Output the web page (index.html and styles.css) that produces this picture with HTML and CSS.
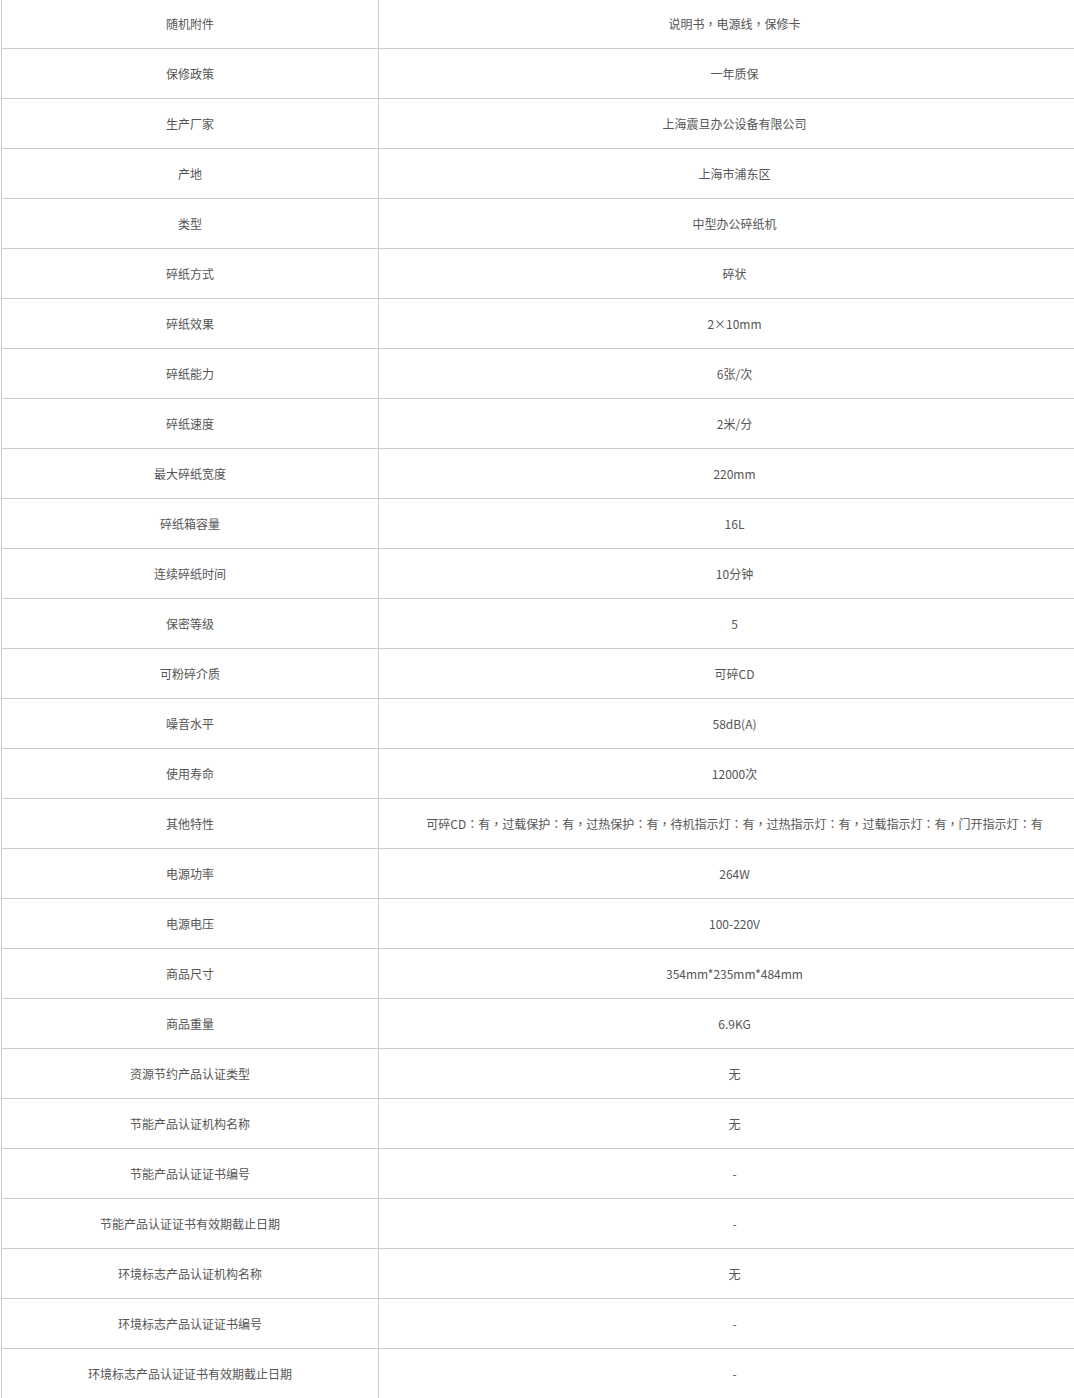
FILE: index.html
```html
<!DOCTYPE html>
<html lang="zh-CN">
<head>
<meta charset="utf-8">
<link rel="stylesheet" href="styles.css">
</head>
<body>
<table class="spec">
<tbody>
<tr><td class="k">随机附件</td><td class="v">说明书<span class="p" lang="zh-TW">，</span>电源线<span class="p" lang="zh-TW">，</span>保修卡</td></tr>
<tr><td class="k">保修政策</td><td class="v">一年质保</td></tr>
<tr><td class="k">生产厂家</td><td class="v">上海震旦办公设备有限公司</td></tr>
<tr><td class="k">产地</td><td class="v">上海市浦东区</td></tr>
<tr><td class="k">类型</td><td class="v">中型办公碎纸机</td></tr>
<tr><td class="k">碎纸方式</td><td class="v">碎状</td></tr>
<tr><td class="k">碎纸效果</td><td class="v">2×10mm</td></tr>
<tr><td class="k">碎纸能力</td><td class="v">6张/次</td></tr>
<tr><td class="k">碎纸速度</td><td class="v">2米/分</td></tr>
<tr><td class="k">最大碎纸宽度</td><td class="v">220mm</td></tr>
<tr><td class="k">碎纸箱容量</td><td class="v">16L</td></tr>
<tr><td class="k">连续碎纸时间</td><td class="v">10分钟</td></tr>
<tr><td class="k">保密等级</td><td class="v">5</td></tr>
<tr><td class="k">可粉碎介质</td><td class="v">可碎CD</td></tr>
<tr><td class="k">噪音水平</td><td class="v">58dB(A)</td></tr>
<tr><td class="k">使用寿命</td><td class="v">12000次</td></tr>
<tr><td class="k">其他特性</td><td class="v">可碎CD<span class="p" lang="zh-TW">：</span>有<span class="p" lang="zh-TW">，</span>过载保护<span class="p" lang="zh-TW">：</span>有<span class="p" lang="zh-TW">，</span>过热保护<span class="p" lang="zh-TW">：</span>有<span class="p" lang="zh-TW">，</span>待机指示灯<span class="p" lang="zh-TW">：</span>有<span class="p" lang="zh-TW">，</span>过热指示灯<span class="p" lang="zh-TW">：</span>有<span class="p" lang="zh-TW">，</span>过载指示灯<span class="p" lang="zh-TW">：</span>有<span class="p" lang="zh-TW">，</span>门开指示灯<span class="p" lang="zh-TW">：</span>有</td></tr>
<tr><td class="k">电源功率</td><td class="v">264W</td></tr>
<tr><td class="k">电源电压</td><td class="v">100-220V</td></tr>
<tr><td class="k">商品尺寸</td><td class="v">354mm*235mm*484mm</td></tr>
<tr><td class="k">商品重量</td><td class="v">6.9KG</td></tr>
<tr><td class="k">资源节约产品认证类型</td><td class="v">无</td></tr>
<tr><td class="k">节能产品认证机构名称</td><td class="v">无</td></tr>
<tr><td class="k">节能产品认证证书编号</td><td class="v">-</td></tr>
<tr><td class="k">节能产品认证证书有效期截止日期</td><td class="v">-</td></tr>
<tr><td class="k">环境标志产品认证机构名称</td><td class="v">无</td></tr>
<tr><td class="k">环境标志产品认证证书编号</td><td class="v">-</td></tr>
<tr><td class="k">环境标志产品认证证书有效期截止日期</td><td class="v">-</td></tr>
</tbody>
</table>
</body>
</html>
```
FILE: styles.css
```css
html, body {
  margin: 0;
  padding: 0;
  background: #fff;
}
body {
  font-family: "Noto Sans CJK SC", "Microsoft YaHei", sans-serif;
  font-size: 12px;
  color: #555;
  overflow: hidden;
}
.spec {
  border-collapse: collapse;
  width: 1073px;
  margin-left: 1px;
  margin-top: -1px;
  table-layout: fixed;
}
.spec td {
  height: 49px;
  padding: 0;
  border-bottom: 1px solid #ccc;
  text-align: center;
  vertical-align: middle;
  line-height: 16px;
  white-space: nowrap;
}
.spec .k {
  width: 376px;
  border-left: 1px solid #ccc;
  border-right: 1px solid #ccc;
}
.spec .v {
  padding-left: 16px;
}
.spec .p {
  font-family: "Noto Sans CJK TC", "Noto Sans CJK SC", sans-serif;
}
```
